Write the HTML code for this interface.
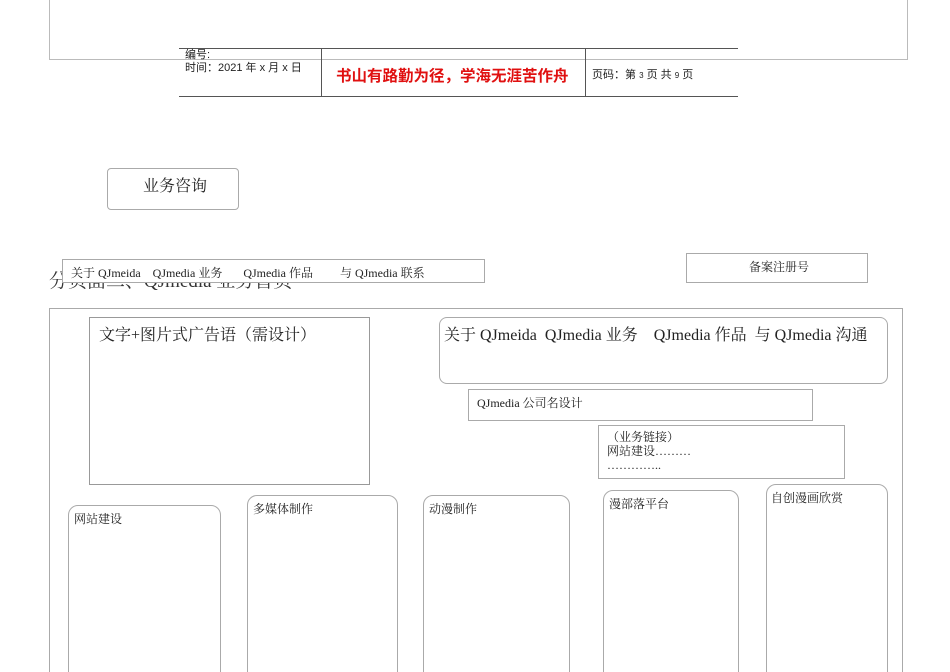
<!DOCTYPE html>
<html><head><meta charset="utf-8"><style>
*{margin:0;padding:0;box-sizing:border-box}
html{height:672px;overflow:hidden}
body{width:950px;height:672px;background:#fff;position:relative;overflow:hidden;font-family:"Liberation Serif","Noto Serif CJK SC",serif;color:#222}
.a{position:absolute}
.b{position:absolute;border:1px solid #aaa}
.r{border-radius:8px}
.s{font-family:"Liberation Sans","Noto Sans CJK SC",sans-serif}
</style></head><body>
<div class="b" style="left:49px;top:-2px;width:859px;height:62px;border-color:#bbb"></div>
<div class="a" style="left:179px;top:48px;width:559px;height:1px;background:#555"></div>
<div class="a" style="left:179px;top:96px;width:559px;height:1px;background:#555"></div>
<div class="a" style="left:321px;top:48px;width:1px;height:48px;background:#555"></div>
<div class="a" style="left:585px;top:48px;width:1px;height:48px;background:#555"></div>
<div class="a s" style="left:185px;top:49px;font-size:11px;line-height:13px">编号:<br>时间：2021 年 x 月 x 日</div>
<div class="a s" style="left:336px;top:64px;font-size:15.5px;color:#e01010;font-weight:bold">书山有路勤为径，学海无涯苦作舟</div>
<div class="a s" style="left:592px;top:66px;font-size:11px">页码：第 <span style="font-size:8px">3</span> 页 共 <span style="font-size:8px">9</span> 页</div>
<div class="b r" style="left:107px;top:168px;width:132px;height:42px;border-radius:4px"></div>
<div class="a" style="left:143px;top:173px;font-size:16px">业务咨询</div>
<div class="a" style="left:49px;top:266px;font-size:19px;color:#333">分页面二、QJmedia 业务首页</div>
<div class="b" style="left:62px;top:259px;width:423px;height:24px;background:#fff"></div>
<div class="a" style="left:71px;top:264px;font-size:12px;white-space:pre">关于 QJmeida    QJmedia 业务       QJmedia 作品         与 QJmedia 联系</div>
<div class="b" style="left:686px;top:253px;width:182px;height:30px"></div>
<div class="a" style="left:749px;top:258px;font-size:12px">备案注册号</div>
<div class="b" style="left:49px;top:308px;width:854px;height:380px"></div>
<div class="b" style="left:89px;top:317px;width:281px;height:168px;border-color:#999"></div>
<div class="a" style="left:99px;top:322px;font-size:16px">文字+图片式广告语（需设计）</div>
<div class="b r" style="left:439px;top:317px;width:449px;height:67px"></div>
<div class="a" style="left:444px;top:322px;font-size:16px;white-space:pre">关于 QJmeida  QJmedia 业务    QJmedia 作品  与 QJmedia 沟通</div>
<div class="b" style="left:468px;top:389px;width:345px;height:32px"></div>
<div class="a" style="left:477px;top:394px;font-size:12px">QJmedia 公司名设计</div>
<div class="b" style="left:598px;top:425px;width:247px;height:54px"></div>
<div class="a" style="left:607px;top:430px;font-size:12px;line-height:14px">（业务链接）<br>网站建设………<br>…………..</div>
<div class="b r" style="left:68px;top:505px;width:153px;height:200px;border-radius:10px"></div>
<div class="a" style="left:74px;top:510px;font-size:12px">网站建设</div>
<div class="b r" style="left:247px;top:495px;width:151px;height:210px;border-radius:10px"></div>
<div class="a" style="left:253px;top:500px;font-size:12px">多媒体制作</div>
<div class="b r" style="left:423px;top:495px;width:147px;height:210px;border-radius:10px"></div>
<div class="a" style="left:429px;top:500px;font-size:12px">动漫制作</div>
<div class="b r" style="left:603px;top:490px;width:136px;height:215px;border-radius:10px"></div>
<div class="a" style="left:609px;top:495px;font-size:12px">漫部落平台</div>
<div class="b r" style="left:766px;top:484px;width:122px;height:220px;border-radius:10px"></div>
<div class="a" style="left:771px;top:489px;font-size:12px">自创漫画欣赏</div>
</body></html>
